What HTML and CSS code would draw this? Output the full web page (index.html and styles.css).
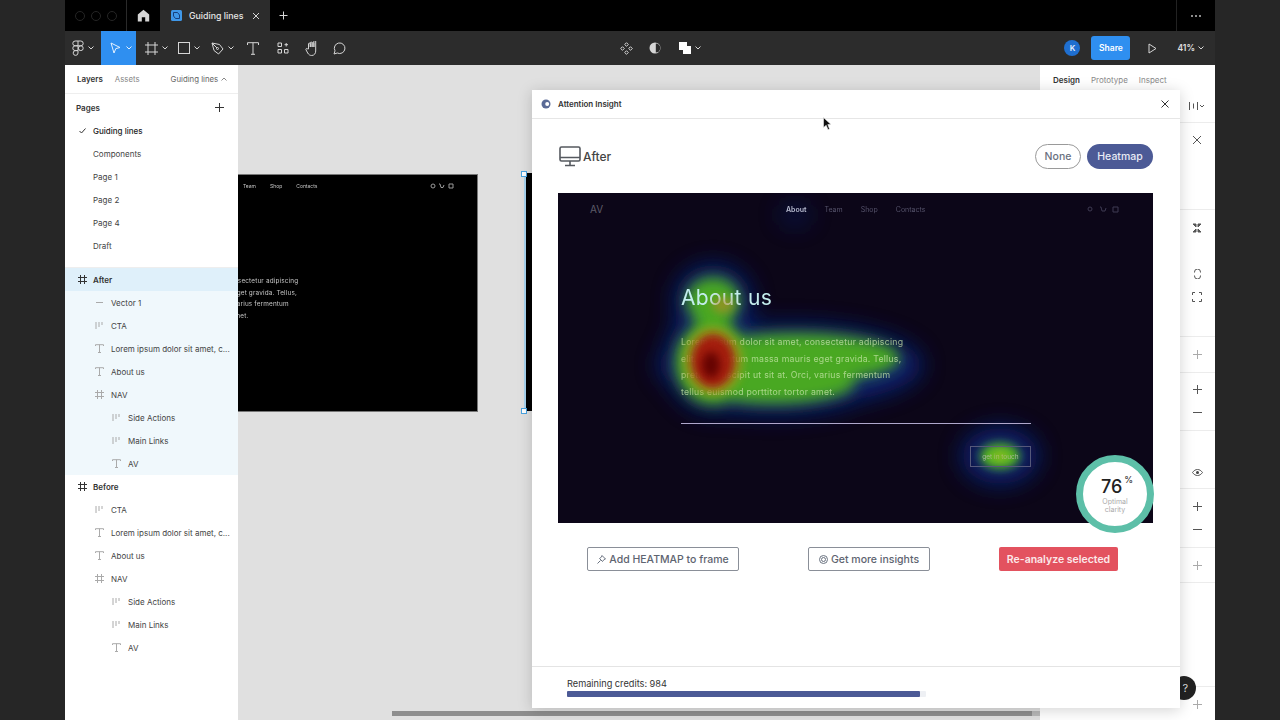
FILE: index.html
```html
<!DOCTYPE html>
<html lang="en">
<head>
<meta charset="utf-8">
<title>Guiding lines</title>
<link rel="stylesheet" href="styles.css">
</head>
<body>
<div class="app">
  <header class="tabbar">
    <div class="lights"><i></i><i></i><i></i></div>
    <div class="home"><svg width="13" height="13" viewBox="0 0 13 13"><path class="f-light" d="M6.5 .8 12.2 5.6V12.4H8.2V8.2H4.8V12.4H.8V5.6Z"/></svg></div>
    <div class="tab">
      <svg width="11" height="11" viewBox="0 0 11 11"><rect class="f-blue" width="11" height="11" rx="1.5"/><path class="s-navy" d="M2.5 2.5H6.5L8.5 5V8.5H4.5L2.5 6Z"/></svg>
      <span class="tab-name">Guiding lines</span>
      <svg width="8" height="8" viewBox="0 0 8 8"><path class="s-light" d="M1 1 7 7M7 1 1 7"/></svg>
    </div>
    <div class="tab-add"><svg width="9" height="9" viewBox="0 0 9 9"><path class="s-light" d="M4.5 .5V8.5M.5 4.5H8.5"/></svg></div>
    <div class="tab-more"><i></i><i></i><i></i></div>
  </header>

  <nav class="toolbar">
    <div class="tool t-logo">
      <svg width="12" height="16" viewBox="0 0 12 16"><path class="s-light" d="M6 1H3.2a2.4 2.4 0 0 0 0 4.8H6V1Zm0 0h2.8a2.4 2.4 0 0 1 0 4.8H6M6 5.8H3.2a2.4 2.4 0 0 0 0 4.8H6V5.8Zm2.8 0a2.4 2.4 0 1 1 0 4.8 2.4 2.4 0 0 1 0-4.8ZM6 10.6H3.2A2.4 2.4 0 1 0 6 13Z"/></svg>
      <svg class="chev" width="6" height="4" viewBox="0 0 6 4"><path class="s-light" d="M.5 .5 3 3 5.500 .5"/></svg>
    </div>
    <div class="tool t-move">
      <svg width="11" height="12" viewBox="0 0 11 12"><path class="s-white" d="M1 1 10 5.500 5.800 6.600 4 11Z"/></svg>
      <svg class="chev" width="6" height="4" viewBox="0 0 6 4"><path class="s-white" d="M.5 .5 3 3 5.500 .5"/></svg>
    </div>
    <div class="tool t-frame">
      <svg width="13" height="13" viewBox="0 0 13 13"><path class="s-light" d="M3 0V13M10 0V13M0 3H13M0 10H13"/></svg>
      <svg class="chev" width="6" height="4" viewBox="0 0 6 4"><path class="s-light" d="M.5 .5 3 3 5.500 .5"/></svg>
    </div>
    <div class="tool t-rect">
      <svg width="12" height="12" viewBox="0 0 12 12"><rect class="s-light" x=".5" y=".5" width="11" height="11"/></svg>
      <svg class="chev" width="6" height="4" viewBox="0 0 6 4"><path class="s-light" d="M.5 .5 3 3 5.500 .5"/></svg>
    </div>
    <div class="tool t-pen">
      <svg width="13" height="13" viewBox="0 0 13 13"><path class="s-light" d="M1 1 8.500 2.500 12 7 7.500 12 3 8.500ZM1 1 6 6"/><circle class="s-light" cx="6.500" cy="6.500" r="1"/></svg>
      <svg class="chev" width="6" height="4" viewBox="0 0 6 4"><path class="s-light" d="M.5 .5 3 3 5.500 .5"/></svg>
    </div>
    <div class="tool t-text"><svg width="12" height="13" viewBox="0 0 12 13"><path class="s-light" d="M.5 3V.7H11.500V3M6 .7V12.300M4 12.300H8"/></svg></div>
    <div class="tool t-widgets"><svg width="12" height="12" viewBox="0 0 12 12"><path class="s-light" d="M1 1H4.500V4.500H1ZM1 7.500H4.500V11H1ZM7.500 7.500H11V11H7.500ZM9.200 1V4.500M7.500 2.700H11"/></svg></div>
    <div class="tool t-hand"><svg width="14" height="15" viewBox="0 0 14 15"><path class="s-light" d="M3.500 8V3a.9.9 0 0 1 1.800 0v3-4a.9.9 0 0 1 1.800 0v4-3.500a.9.9 0 0 1 1.800 0V6-2.500a.9.9 0 0 1 1.800 0V10c0 2.500-1.500 4.500-4 4.500-2 0-3-1-4-2.500L1 8.800c-.6-1 .7-1.800 1.400-1Z"/></svg></div>
    <div class="tool t-comment"><svg width="13" height="13" viewBox="0 0 13 13"><path class="s-light" d="M1 12 2 8.800A5.300 5.300 0 1 1 4.300 11Z"/></svg></div>

    <div class="tool t-comp"><svg width="13" height="13" viewBox="0 0 13 13"><path class="s-light" d="M6.500 .7 8.300 2.500 6.500 4.300 4.700 2.500ZM6.500 8.700 8.300 10.500 6.500 12.300 4.700 10.500ZM2.500 4.700 4.300 6.500 2.500 8.300 .7 6.500ZM10.500 4.700 12.300 6.500 10.500 8.300 8.700 6.500Z"/></svg></div>
    <div class="tool t-mask"><svg width="12" height="12" viewBox="0 0 12 12"><circle class="f-light" cx="6" cy="6" r="5.500"/><path class="f-dark" d="M6.800 1.500a4.500 4.500 0 0 1 0 9Z"/></svg></div>
    <div class="tool t-bool">
      <svg width="12" height="12" viewBox="0 0 12 12"><path class="f-white" d="M0 0H8V4H12V12H4V8H0Z"/></svg>
      <svg class="chev" width="6" height="4" viewBox="0 0 6 4"><path class="s-light" d="M.5 .5 3 3 5.500 .5"/></svg>
    </div>

    <div class="tool-right">
      <span class="avatar">K</span>
      <span class="share">Share</span>
      <svg class="play" width="9" height="11" viewBox="0 0 9 11"><path class="s-light" d="M1 1 8 5.500 1 10Z"/></svg>
      <span class="zoom-val">41%</span>
      <svg width="6" height="4" viewBox="0 0 6 4"><path class="s-light" d="M.5 .5 3 3 5.500 .5"/></svg>
    </div>
  </nav>

  <main class="workspace">
    <aside class="left">
      <div class="left-tabs">
        <b>Layers</b><span>Assets</span><span class="file">Guiding lines <svg width="6" height="4" viewBox="0 0 6 4"><path class="s-grey" d="M.5 3.500 3 1 5.500 3.500"/></svg></span>
      </div>
      <div class="pages-head"><b>Pages</b><svg width="9" height="9" viewBox="0 0 9 9"><path class="s-ink" d="M4.500 0V9M0 4.500H9"/></svg></div>
      <div class="pages">
        <div class="page current"><svg width="7" height="6" viewBox="0 0 7 6"><path class="s-ink" d="M.5 3 2.500 5 6.500 .5"/></svg>Guiding lines</div>
        <div class="page">Components</div>
        <div class="page">Page 1</div>
        <div class="page">Page 2</div>
        <div class="page">Page 4</div>
        <div class="page">Draft</div>
      </div>
      <div class="layers">
        <div class="layer frame sel-head"><svg class="ic" width="9" height="9" viewBox="0 0 9 9"><path class="s-ink" d="M2.500 0V9M6.500 0V9M0 2.500H9M0 6.500H9"/></svg>After</div>
        <div class="layer lv1 sel"><svg class="ic" width="9" height="9" viewBox="0 0 9 9"><path class="s-soft" d="M1 4.500H8"/></svg>Vector 1</div>
        <div class="layer lv1 sel"><svg class="ic" width="9" height="9" viewBox="0 0 9 9"><path class="s-soft" d="M1 1V8M4 1V6M7 1V4"/></svg>CTA</div>
        <div class="layer lv1 sel"><svg class="ic" width="9" height="9" viewBox="0 0 9 9"><path class="s-soft" d="M.5 2V.7H8.500V2M4.500 .7V8.500M3 8.500H6"/></svg>Lorem ipsum dolor sit amet, c...</div>
        <div class="layer lv1 sel"><svg class="ic" width="9" height="9" viewBox="0 0 9 9"><path class="s-soft" d="M.5 2V.7H8.500V2M4.500 .7V8.500M3 8.500H6"/></svg>About us</div>
        <div class="layer lv1 sel"><svg class="ic" width="9" height="9" viewBox="0 0 9 9"><path class="s-soft" d="M2.500 0V9M6.500 0V9M0 2.500H9M0 6.500H9"/></svg>NAV</div>
        <div class="layer lv2 sel"><svg class="ic" width="9" height="9" viewBox="0 0 9 9"><path class="s-soft" d="M1 1V8M4 1V6M7 1V4"/></svg>Side Actions</div>
        <div class="layer lv2 sel"><svg class="ic" width="9" height="9" viewBox="0 0 9 9"><path class="s-soft" d="M1 1V8M4 1V6M7 1V4"/></svg>Main Links</div>
        <div class="layer lv2 sel"><svg class="ic" width="9" height="9" viewBox="0 0 9 9"><path class="s-soft" d="M.5 2V.7H8.500V2M4.500 .7V8.500M3 8.500H6"/></svg>AV</div>
        <div class="layer frame"><svg class="ic" width="9" height="9" viewBox="0 0 9 9"><path class="s-ink" d="M2.500 0V9M6.500 0V9M0 2.500H9M0 6.500H9"/></svg>Before</div>
        <div class="layer lv1"><svg class="ic" width="9" height="9" viewBox="0 0 9 9"><path class="s-soft" d="M1 1V8M4 1V6M7 1V4"/></svg>CTA</div>
        <div class="layer lv1"><svg class="ic" width="9" height="9" viewBox="0 0 9 9"><path class="s-soft" d="M.5 2V.7H8.500V2M4.500 .7V8.500M3 8.500H6"/></svg>Lorem ipsum dolor sit amet, c...</div>
        <div class="layer lv1"><svg class="ic" width="9" height="9" viewBox="0 0 9 9"><path class="s-soft" d="M.5 2V.7H8.500V2M4.500 .7V8.500M3 8.500H6"/></svg>About us</div>
        <div class="layer lv1"><svg class="ic" width="9" height="9" viewBox="0 0 9 9"><path class="s-soft" d="M2.500 0V9M6.500 0V9M0 2.500H9M0 6.500H9"/></svg>NAV</div>
        <div class="layer lv2"><svg class="ic" width="9" height="9" viewBox="0 0 9 9"><path class="s-soft" d="M1 1V8M4 1V6M7 1V4"/></svg>Side Actions</div>
        <div class="layer lv2"><svg class="ic" width="9" height="9" viewBox="0 0 9 9"><path class="s-soft" d="M1 1V8M4 1V6M7 1V4"/></svg>Main Links</div>
        <div class="layer lv2"><svg class="ic" width="9" height="9" viewBox="0 0 9 9"><path class="s-soft" d="M.5 2V.7H8.500V2M4.500 .7V8.500M3 8.500H6"/></svg>AV</div>
      </div>
    </aside>

    <section class="canvas">
      <div class="artboard board-before">
        <div class="board-nav"><span>Team</span><span>Shop</span><span>Contacts</span></div>
        <svg class="board-icons" width="24" height="6" viewBox="0 0 24 6"><circle class="s-pale" cx="3" cy="3" r="2"/><path class="s-pale" d="M9 1H10L11 4.500H13L14 2M19 1H23V5H19Z"/></svg>
        <p class="board-copy">Lorem ipsum dolor sit amet, consectetur adipiscing<br>elit. Fermentum massa mauris eget gravida. Tellus,<br>pretium suscipit ut sit at. Orci, varius fermentum<br>tellus euismod porttitor tortor amet.</p>
      </div>
      <div class="artboard board-after"><i class="handle h-top"></i><i class="handle h-bottom"></i></div>
      <div class="scroll"><i></i></div>
    </section>

    <aside class="right">
      <div class="right-tabs"><b>Design</b><span>Prototype</span><span>Inspect</span></div>
      <div class="rsec r1"><svg width="16" height="8" viewBox="0 0 16 8"><path class="s-ink2" d="M.5 0V8M8.500 0V8M4.500 1.500V6.500"/><path class="s-ink2" d="M11 3 13 5 15 3"/></svg></div>
      <div class="rsec r2"><svg width="10" height="10" viewBox="0 0 10 10"><path class="s-ink2" d="M1 1 9 9M9 1 1 9"/></svg></div>
      <div class="rsec r3">
        <svg width="10" height="10" viewBox="0 0 10 10"><path class="s-ink3" d="M1 1H4V4ZM9 1H6V4ZM1 9H4V6ZM9 9H6V6Z"/></svg>
        <svg class="gap1" width="7" height="10" viewBox="0 0 7 10"><path class="s-ink2" d="M.5 3.500V3a3 3 0 0 1 6 0v.5M.5 6.500V7a3 3 0 0 0 6 0v-.5"/></svg>
        <svg class="gap2" width="10" height="10" viewBox="0 0 10 10"><path class="s-ink2" d="M.5 3V.5H3M7 .5H9.500V3M9.500 7V9.500H7M3 9.500H.5V7"/></svg>
      </div>
      <div class="rsec r4"><svg width="9" height="9" viewBox="0 0 9 9"><path class="s-soft" d="M4.500 0V9M0 4.500H9"/></svg></div>
      <div class="rsec r5"><svg width="9" height="9" viewBox="0 0 9 9"><path class="s-ink2" d="M4.500 0V9M0 4.500H9"/></svg><svg class="gap3" width="9" height="1" viewBox="0 0 9 1"><path class="s-ink2" d="M0 .5H9"/></svg></div>
      <div class="rsec r6"><svg width="11" height="7" viewBox="0 0 11 7"><path class="s-ink2" d="M.5 3.500C2 1.500 3.500 .5 5.500 .5S9 1.500 10.500 3.500C9 5.500 7.500 6.500 5.500 6.500S2 5.500 .5 3.500Z"/><circle class="f-ink" cx="5.500" cy="3.500" r="1.500"/></svg></div>
      <div class="rsec r7"><svg width="9" height="9" viewBox="0 0 9 9"><path class="s-ink2" d="M4.500 0V9M0 4.500H9"/></svg><svg class="gap4" width="9" height="1" viewBox="0 0 9 1"><path class="s-ink2" d="M0 .5H9"/></svg></div>
      <div class="rsec r8"><svg width="9" height="9" viewBox="0 0 9 9"><path class="s-soft" d="M4.500 0V9M0 4.500H9"/></svg></div>
      <div class="rsec r9"></div>
      <div class="rsec r10"><svg width="9" height="9" viewBox="0 0 9 9"><path class="s-soft" d="M4.500 0V9M0 4.500H9"/></svg></div>
    </aside>

    <span class="help">?</span>

    <section class="plugin">
      <header class="plugin-bar">
        <svg width="10" height="10" viewBox="0 0 10 10"><circle class="f-plug" cx="5" cy="5" r="4.500"/><circle class="f-white" cx="6.200" cy="5" r="2"/></svg>
        <span class="plugin-title">Attention Insight</span>
        <svg class="plugin-close" width="8" height="8" viewBox="0 0 8 8"><path class="s-ink" d="M.5 .5 7.500 7.500M7.500 .5 .5 7.500"/></svg>
      </header>
      <div class="plugin-head">
        <svg width="22" height="21" viewBox="0 0 22 21"><rect class="s-mon" x="1" y="1" width="20" height="14" rx="1.500"/><path class="s-mon" d="M1 11.500H21M11 15V19M6 19.500H16"/></svg>
        <span class="frame-name">After</span>
        <span class="pill pill-none">None</span>
        <span class="pill pill-heat">Heatmap</span>
      </div>
      <div class="preview">
        <svg class="heat" viewBox="0 0 595 330" width="595" height="330">
          <defs>
            <filter id="b16" x="-60%" y="-60%" width="220%" height="220%"><feGaussianBlur stdDeviation="12"/></filter>
            <filter id="b8" x="-50%" y="-50%" width="200%" height="200%"><feGaussianBlur stdDeviation="7"/></filter>
            <filter id="b5" x="-50%" y="-50%" width="200%" height="200%"><feGaussianBlur stdDeviation="5"/></filter>
          </defs>
          <g class="h-blue" filter="url(#b16)">
            <ellipse cx="232" cy="172" rx="132" ry="40"/><ellipse cx="215" cy="195" rx="95" ry="26"/>
            <ellipse cx="155" cy="165" rx="46" ry="54"/>
            <ellipse cx="155" cy="108" rx="38" ry="36"/>
            <ellipse cx="442" cy="263" rx="38" ry="28"/>
            <ellipse class="h-faint" cx="237" cy="22" rx="16" ry="12"/>
          </g>
          <g class="h-green" filter="url(#b8)">
            <ellipse cx="238" cy="165" rx="104" ry="25"/><ellipse cx="215" cy="190" rx="82" ry="21"/>
            <ellipse cx="155" cy="170" rx="38" ry="42"/>
            <ellipse cx="155" cy="108" rx="27" ry="24"/><ellipse cx="155" cy="135" rx="19" ry="22"/>
          </g>
          <ellipse class="h-green2" filter="url(#b5)" cx="442" cy="263" rx="20" ry="13"/>
        </svg>
        <span class="pv-logo">AV</span>
        <div class="pv-nav"><b>About</b><span>Team</span><span>Shop</span><span>Contacts</span></div>
        <svg class="pv-icons" width="34" height="7" viewBox="0 0 34 7"><circle class="s-dim" cx="3" cy="3" r="2"/><path class="s-dim" d="M13 1H14L15 5H18L19 2M26 1H31V6H26Z"/></svg>
        <h1>About us</h1>
        <p class="pv-copy">Lorem ipsum dolor sit amet, consectetur adipiscing<br>elit. Fermentum massa mauris eget gravida. Tellus,<br>pretium suscipit ut sit at. Orci, varius fermentum<br>tellus euismod porttitor tortor amet.</p>
        <i class="pv-line"></i>
        <span class="pv-cta">get in touch</span>
        <svg class="heat" viewBox="0 0 595 330" width="595" height="330">
          <defs>
            <filter id="c5" x="-50%" y="-50%" width="200%" height="200%"><feGaussianBlur stdDeviation="5"/></filter>
            <filter id="c3" x="-50%" y="-50%" width="200%" height="200%"><feGaussianBlur stdDeviation="4"/></filter>
          </defs>
          <ellipse class="h-lime" filter="url(#c5)" cx="442" cy="263" rx="9" ry="5"/>
          <ellipse class="h-orange" filter="url(#c5)" cx="165" cy="112" rx="11" ry="8"/>
          <ellipse class="h-yellow" filter="url(#c5)" cx="155" cy="168" rx="30" ry="35"/>
          <ellipse class="h-red" filter="url(#c3)" cx="155" cy="168" rx="22" ry="27"/>
          <ellipse class="h-deep" filter="url(#c3)" cx="153" cy="172" rx="9" ry="13"/>
        </svg>
        <div class="score">
          <div class="score-num"><span>76</span><sup>%</sup></div>
          <small>Optimal<br>clarity</small>
        </div>
      </div>
      <div class="actions">
        <span class="btn btn-add"><svg width="9" height="9" viewBox="0 0 9 9"><path class="s-mid" d="M5 .5 8.500 4 7 4.500 5.500 6.500 2.500 3.500 4.500 2ZM3.500 5.500 .5 8.500"/></svg>Add HEATMAP to frame</span>
        <span class="btn btn-more"><svg width="9" height="9" viewBox="0 0 9 9"><circle class="s-mid" cx="4.500" cy="4.500" r="4"/><circle class="s-mid" cx="4.500" cy="4.500" r="2"/></svg>Get more insights</span>
        <span class="btn btn-red">Re-analyze selected</span>
      </div>
      <footer class="credits">
        <span>Remaining credits: 984</span>
        <div class="track"><i></i></div>
      </footer>
    </section>

    <svg class="cursor" width="9" height="14" viewBox="0 0 9 14"><path class="f-cursor" d="M.5 .5 8 7.500H4.800L6.500 12 5 12.800 3.200 8.300 .5 10.500Z"/></svg>
  </main>
</div>
</body>
</html>
```
FILE: styles.css
```css
* { box-sizing: border-box; }
html, body { margin: 0; height: 100%; }
body { background: #262626; font-family: Inter, "Liberation Sans", sans-serif; overflow: hidden; }
svg { display: block; flex: none; fill: none; }

.s-light, .s-white, .s-navy, .s-grey, .s-ink, .s-ink2, .s-ink3, .s-soft, .s-pale, .s-dim, .s-mon, .s-mid { fill: none; stroke-width: 1; }
.s-light { stroke: #d6d6d6; }
.s-white { stroke: #e4f1ff; }
.s-navy { stroke: #173f7a; }
.s-grey { stroke: #888; }
.s-ink { stroke: #333; }
.s-ink2 { stroke: #555; }
.s-ink3 { stroke: #555; fill: #555; }
.s-soft { stroke: #aaa; }
.s-pale { stroke: #9a9a9a; }
.s-dim { stroke: #3e3a52; }
.s-mon { stroke: #55595f; stroke-width: 1.6; }
.s-mid { stroke: #6a7280; }
.f-light { fill: #d6d6d6; }
.f-white { fill: #fff; }
.f-dark { fill: #2b2b2b; }
.f-blue { fill: #3f97e8; }
.f-ink { fill: #444; }
.f-plug { fill: #5a6a96; }
.f-cursor { fill: #111; stroke: #eee; stroke-width: .6; }

.app { width: 1150px; height: 720px; margin: 0 auto; display: flex; flex-direction: column; background: #2c2c2c; filter: blur(.35px); }

/* tab bar */
.tabbar { height: 31px; background: #000; display: flex; align-items: center; flex: none; }
.lights { width: 62px; height: 31px; display: flex; align-items: center; gap: 6px; padding-left: 10px; border-right: 1px solid #2a2a2a; }
.lights i { width: 10px; height: 10px; border-radius: 50%; border: 1px solid #252525; }
.home { width: 33px; display: flex; justify-content: center; }
.tab { width: 110px; height: 31px; background: #2c2c2c; display: flex; align-items: center; padding-left: 11px; }
.tab-name { color: #e6e6e6; font-size: 8.800px; font-weight: 500; margin-left: 7px; width: 63px; white-space: nowrap; }
.tab-add { margin-left: 9px; }
.tab-more { margin-left: auto; width: 39px; height: 31px; border-left: 1px solid #222; display: flex; align-items: center; justify-content: center; gap: 2px; }
.tab-more i { width: 2px; height: 2px; background: #bbb; border-radius: 50%; }

/* tool bar */
.toolbar { height: 34px; flex: none; display: flex; align-items: center; background: #2c2c2c; }
.tool { height: 34px; display: flex; align-items: center; justify-content: center; gap: 4px; }
.t-logo { width: 36px; }
.t-move { width: 35px; background: #2f8ff0; gap: 5px; padding-left: 4px; }
.t-frame { width: 35px; padding-left: 5px; }
.t-rect { width: 33px; padding-left: 2px; }
.t-pen { width: 35px; padding-left: 2px; }
.t-text { width: 28px; }
.t-widgets { width: 30px; padding-left: 1px; }
.t-hand { width: 29px; }
.t-comment { width: 27px; }
.t-comp { width: 26px; margin-left: 260px; }
.t-mask { width: 30px; padding-left: 1px; }
.t-bool { width: 30px; margin-left: 5px; padding-left: 1px; }
.tool-right { margin-left: auto; display: flex; align-items: center; padding-right: 11px; }
.avatar { width: 16px; height: 16px; border-radius: 50%; background: #1f6fd0; color: #e8f2ff; font-size: 8px; font-weight: 600; display: flex; align-items: center; justify-content: center; }
.share { width: 39px; height: 24px; margin-left: 11px; border-radius: 3px; background: #2f8ff0; color: #fff; font-size: 8.5px; font-weight: 600; display: flex; align-items: center; justify-content: center; }
.play { margin-left: 18px; }
.zoom-val { margin-left: 20px; margin-right: 3px; color: #e0e0e0; font-size: 8.5px; font-weight: 600; }

/* workspace */
.workspace { flex: 1; min-height: 0; display: flex; position: relative; background: #e0e0e0; }
.left { width: 173px; flex: none; background: #fff; z-index: 2; color: #333; font-size: 8px; }
.left-tabs { height: 29px; border-bottom: 1px solid #eee; display: flex; align-items: center; padding-left: 12px; gap: 12px; color: #888; }
.left-tabs b { color: #333; font-weight: 600; }
.left-tabs span { font-size: 7.800px; }
.left-tabs .file { margin-left: 19px; display: flex; align-items: center; gap: 3px; color: #666; }
.pages-head { height: 25px; display: flex; align-items: center; justify-content: space-between; padding: 2px 14px 0 11px; }
.pages-head b { font-weight: 600; }
.pages { height: 149px; border-bottom: 1px solid #eee; }
.page { height: 23px; display: flex; align-items: center; padding-left: 28px; color: #444; position: relative; }
.page.current { color: #222; font-weight: 500; padding-left: 14px; gap: 7px; }
.layer { height: 23px; display: flex; align-items: center; color: #444; white-space: nowrap; }
.layer .ic { margin-right: 7px; }
.layer.frame { padding-left: 13px; font-weight: 600; color: #333; }
.layer.frame .ic { margin-right: 6px; }
.layer.lv1 { padding-left: 30px; }
.layer.lv2 { padding-left: 47px; }
.sel { background: #f0f8fc; }
.sel-head { background: #dff0fa; }

/* canvas */
.canvas { flex: 1; position: relative; overflow: hidden; background: #e0e0e0; }
.artboard { position: absolute; background: #000; color: #c4c4c4; }
.board-before { left: -191px; top: 110px; width: 430px; height: 236px; outline: 1px solid #777; }
.board-nav { position: absolute; left: 196px; top: 8px; display: flex; gap: 14px; font-size: 5px; filter: grayscale(1); }
.board-icons { position: absolute; left: 383px; top: 8px; }
.board-copy { position: absolute; left: 89px; top: 101px; margin: 0; white-space: nowrap; font-size: 6.400px; line-height: 11.700px; letter-spacing: .16px; filter: grayscale(1); }
.board-after { left: 286px; top: 108px; width: 300px; height: 238px; border-left: 2px solid #a8d4f0; }
.handle { position: absolute; left: -5px; width: 6px; height: 6px; background: #fff; border: 1px solid #4aa3e0; }
.h-top { top: -2px; }
.h-bottom { bottom: -3px; }
.scroll { position: absolute; left: 154px; top: 646px; width: 652px; height: 5px; background: #b8b8b8; }
.scroll i { display: block; width: 640px; height: 5px; background: #8e8e8e; }

/* right panel */
.right { width: 175px; flex: none; background: #fff; z-index: 1; display: flex; flex-direction: column; }
.right-tabs { height: 29px; display: flex; align-items: center; padding-left: 13px; gap: 11px; font-size: 8px; color: #8a8a8a; flex: none; }
.right-tabs b { color: #333; font-weight: 600; }
.rsec { border-bottom: 1px solid #ececec; display: flex; flex-direction: column; align-items: flex-end; padding-right: 13px; flex: none; }
.r1 { height: 29px; justify-content: center; padding: 0 10px 5px 0; }
.r2 { height: 87px; padding-top: 12px; }
.r3 { height: 127px; padding-top: 13px; }
.r4 { height: 36px; justify-content: center; }
.r5 { height: 58px; padding-top: 12px; }
.r6 { height: 58px; padding-top: 38px; padding-right: 12px; }
.r7 { height: 59px; padding-top: 13px; }
.r8 { height: 35px; justify-content: center; }
.r9 { height: 104px; }
.r10 { flex: 1; border-bottom: 0; padding-top: 13px; }
.gap1 { margin-top: 36px; margin-right: 1px; }
.gap2 { margin-top: 13px; }
.gap3 { margin-top: 18px; }
.gap4 { margin-top: 18px; }

.help { position: absolute; left: 1107px; top: 611px; width: 24px; height: 24px; border-radius: 50%; background: #222; color: #ddd; font-size: 11px; display: flex; align-items: center; justify-content: flex-end; padding-right: 8px; z-index: 3; }

/* plugin */
.plugin { position: absolute; left: 467px; top: 25px; width: 648px; height: 618px; background: #fff; z-index: 4; box-shadow: 0 2px 14px rgba(0,0,0,.18); display: flex; flex-direction: column; color: #333; }
.plugin-bar { height: 29px; flex: none; border-bottom: 1px solid #e6e6e6; display: flex; align-items: center; padding: 0 11px 0 9px; }
.plugin-title { font-size: 8px; font-weight: 600; margin-left: 7px; }
.plugin-close { margin-left: auto; }
.plugin-head { height: 74px; flex: none; display: flex; align-items: center; padding: 0 27px 0 27px; }
.frame-name { font-size: 12px; font-weight: 500; color: #444; margin-left: 2px; }
.pill { height: 25px; border-radius: 13px; display: flex; align-items: center; justify-content: center; font-size: 10.500px; font-weight: 500; }
.pill-none { width: 46px; margin-left: auto; border: 1px solid #9a9a9a; color: #6a7080; }
.pill-heat { width: 66px; margin-left: 6px; background: #4c5a96; color: #e8ebf5; }

.preview { width: 595px; height: 330px; margin-left: 26px; position: relative; background: #0c0618; flex: none; }
.preview > * { position: absolute; }
.pv-logo { left: 32px; top: 10px; font-size: 10px; color: #5e5c68; }
.pv-nav { left: 228px; top: 12px; display: flex; gap: 18px; font-size: 7px; color: #55526a; }
.pv-nav b { color: #b8bcd0; font-weight: 600; }
.pv-icons { left: 529px; top: 13px; }
.preview h1 { margin: 0; left: 123px; top: 93px; font-size: 21px; line-height: 24px; font-weight: 400; color: #c4eeee; letter-spacing: .3px; }
.pv-copy { margin: 0; left: 123px; top: 141px; white-space: nowrap; font-size: 8.700px; line-height: 16.500px; color: #cdeab0; letter-spacing: .25px; opacity: .72; }
.pv-line { left: 123px; top: 230px; width: 350px; height: 1px; background: #b0a8cc; }
.pv-cta { left: 412px; top: 253px; width: 61px; height: 21px; border: 1px solid #55587a; font-size: 6.500px; color: #a8b8a0; display: flex; align-items: center; justify-content: center; }
.heat { left: 0; top: 0; }
.h-blue { fill: #0c2c8c; opacity: .8; }
.h-faint { opacity: .45; }
.h-green { fill: #4aa820; }
.h-green2 { fill: #52b522; }
.h-lime { fill: #a8c020; opacity: .7; }
.h-yellow { fill: #a8a01c; opacity: .7; }
.h-orange { fill: #b08a28; opacity: .7; }
.h-red { fill: #a5170f; opacity: .95; }
.h-deep { fill: #5e0606; opacity: .9; }

.score { left: 518px; top: 262px; width: 78px; height: 78px; border-radius: 50%; background: #fff; border: 7px solid #5dbfa8; display: flex; flex-direction: column; align-items: center; justify-content: center; color: #222; }
.score-num { display: flex; align-items: flex-start; margin-left: 4px; }
.score-num span { font-size: 18px; line-height: 20px; font-weight: 500; margin-top: 2px; }
.score-num sup { font-size: 9px; line-height: 9px; margin-left: 2px; vertical-align: baseline; }
.score small { font-size: 7px; line-height: 8px; color: #aaa; text-align: center; margin-top: 1px; }

.actions { height: 24px; margin-top: 24px; flex: none; display: flex; padding-left: 55px; }
.btn { height: 24px; border-radius: 2px; display: flex; align-items: center; justify-content: center; gap: 3px; font-size: 10.500px; font-weight: 500; white-space: nowrap; }
.btn-add, .btn-more { border: 1px solid #8a8f98; color: #5e6470; }
.btn-add { width: 152px; }
.btn-more { width: 122px; margin-left: 69px; }
.btn-red { width: 119px; margin-left: 69px; background: #e3525f; color: #fbe9ea; font-weight: 600; }

.credits { margin-top: auto; height: 42px; flex: none; border-top: 1px solid #e4e4e4; padding: 12px 0 0 35px; font-size: 9.200px; color: #333; }
.credits span { display: block; line-height: 10px; }
.track { width: 359px; height: 6px; margin-top: 2px; background: #eef0f4; border-radius: 1px; }
.track i { display: block; width: 353px; height: 6px; background: #4c5a96; border-radius: 1px; }

.cursor { position: absolute; left: 758px; top: 52px; z-index: 5; }
```
